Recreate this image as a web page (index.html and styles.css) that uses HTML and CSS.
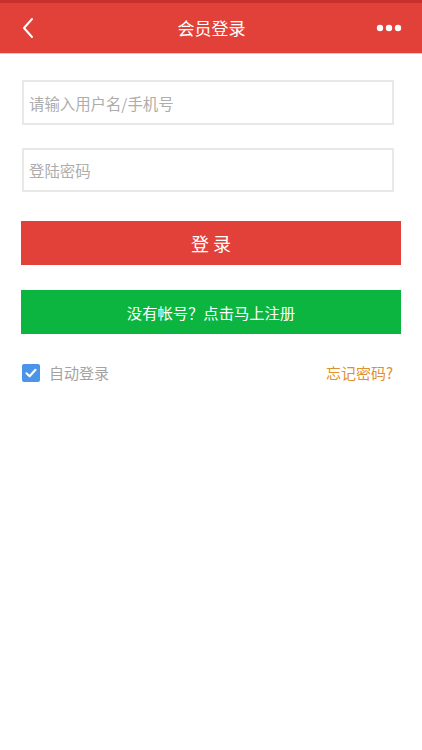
FILE: index.html
```html
<!DOCTYPE html>
<html lang="zh-CN">
<head>
<meta charset="utf-8">
<title>会员登录</title>
<link rel="stylesheet" href="styles.css">
</head>
<body>
<header class="topbar">
  <span class="back">
    <svg width="14" height="22" viewBox="0 0 14 22"><path d="M11 2 L3 11 L11 20" fill="none" stroke="#fff" stroke-width="2" stroke-linecap="round" stroke-linejoin="round"/></svg>
  </span>
  <h1 class="title">会员登录</h1>
  <span class="more">
    <svg width="26" height="8" viewBox="0 0 26 8"><circle cx="4" cy="4" r="3.2" fill="#fff"/><circle cx="13" cy="4" r="3.2" fill="#fff"/><circle cx="22" cy="4" r="3.2" fill="#fff"/></svg>
  </span>
</header>
<main class="content">
  <div class="field field-user"><span class="ph">请输入用户名/手机号</span></div>
  <div class="field field-pass"><span class="ph">登陆密码</span></div>
  <div class="btn btn-login">登 录</div>
  <div class="btn btn-reg">没有帐号？点击马上注册</div>
  <div class="opts">
    <label class="auto">
      <span class="check">
        <svg width="18" height="18" viewBox="0 0 18 18"><path d="M4.5 9.3 L7.6 12.3 L13.5 5.8" fill="none" stroke="#fff" stroke-width="2.2" stroke-linecap="round" stroke-linejoin="round"/></svg>
      </span>
      <span class="auto-text">自动登录</span>
    </label>
    <span class="forgot">忘记密码?</span>
  </div>
</main>
</body>
</html>
```
FILE: styles.css
```css
* { box-sizing: border-box; }
html, body { margin: 0; padding: 0; background: #fff; }
body {
  width: 422px;
  font-family: "Noto Sans CJK SC", "Noto Sans", sans-serif;
}
.topbar {
  height: 54px;
  background: #e2413a;
  border-top: 3px solid #c7302b;
  border-bottom: 1px solid #e9c9c7;
  display: flex;
  align-items: center;
  justify-content: space-between;
  padding: 0 20px 0 21px;
  color: #fff;
}
.back { display: flex; width: 30px; }
.more { display: flex; width: 30px; justify-content: flex-end; }
.title {
  margin: 0 0 2px;
  font-size: 17px;
  font-weight: normal;
  line-height: 1;
}
.content { padding: 26px 21px 0 22px; }
.field {
  width: 372px;
  height: 45px;
  border: 2px solid #e8e8e8;
  display: flex;
  align-items: center;
  padding-left: 5px;
}
.field-pass { margin-top: 23px; height: 44px; }
.ph { font-size: 15.4px; color: #adadad; }
.btn {
  width: 380px;
  height: 44px;
  margin-left: -1px;
  display: flex;
  align-items: center;
  justify-content: center;
  color: #fff;
}
.btn-login { margin-top: 29px; background: #e2413a; font-size: 18px; }
.btn-reg { margin-top: 25px; background: #0bb540; font-size: 15.3px; }
.opts {
  margin-top: 28px;
  display: flex;
  align-items: center;
  justify-content: space-between;
  width: 371px;
}
.auto { display: flex; align-items: center; }
.check {
  width: 18px;
  height: 18px;
  background: #4a94ea;
  border-radius: 2px;
  display: flex;
}
.auto-text { margin-left: 9px; font-size: 15px; color: #a3a3a3; }
.forgot { font-size: 15px; color: #e0912f; }
```
